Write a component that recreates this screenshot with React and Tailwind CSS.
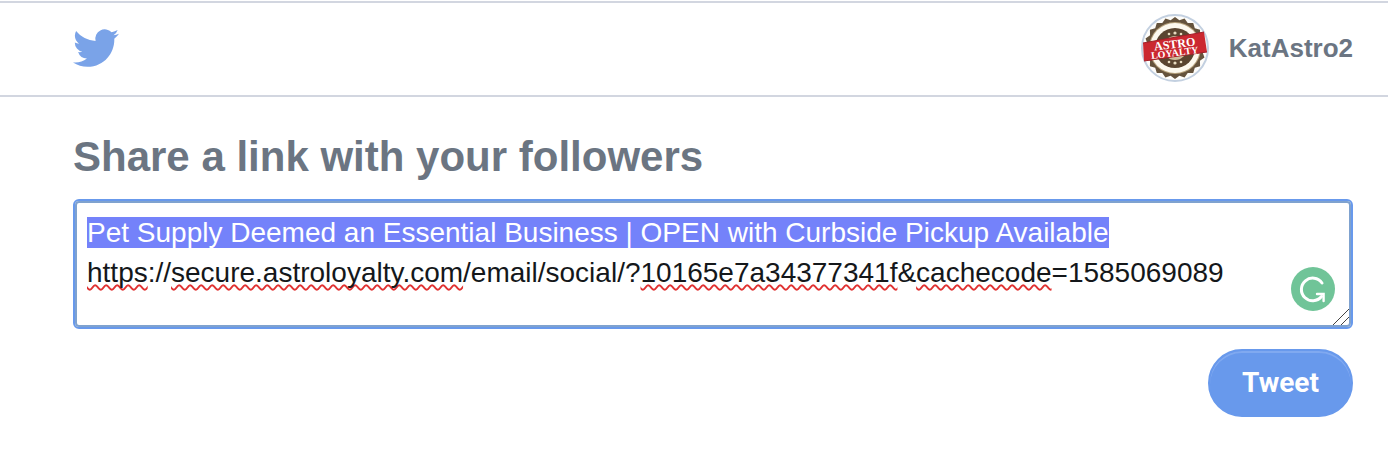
import React, { useState } from "react";

const TITLE = "Pet Supply Deemed an Essential Business | OPEN with Curbside Pickup Available";
const LINK = [
  { text: "https", flagged: true },
  { text: "://" },
  { text: "secure.astroloyalty.com", flagged: true },
  { text: "/email/social/?" },
  { text: "10165e7a34377341f", flagged: true },
  { text: "&" },
  { text: "cachecode", flagged: true },
  { text: "=1585069089" },
];
const INITIAL = TITLE + "\n" + LINK.map((p) => p.text).join("");

// The field and its highlight layer must share the same text metrics
const FIELD_TEXT = "px-2.5 py-2.5 text-[28px] leading-10 whitespace-pre-wrap break-words";

// Toothed edge of the seal: alternating outer and inner radius
const TEETH = Array.from({ length: 40 }, (_, i) => {
  const r = i % 2 ? 28 : 31;
  const a = (i * Math.PI) / 20;
  return `${(34 + r * Math.cos(a)).toFixed(2)},${(34 + r * Math.sin(a)).toFixed(2)}`;
}).join(" ");

function Bird() {
  return (
    <svg viewBox="0 0 24 24" className="w-[46px] h-[46px]" fill="#7aa3e8" aria-hidden="true">
      <path d="M23.953 4.57a10 10 0 01-2.825.775 4.958 4.958 0 002.163-2.723c-.951.555-2.005.959-3.127 1.184a4.92 4.92 0 00-8.384 4.482C7.69 8.095 4.067 6.13 1.64 3.162a4.822 4.822 0 00-.666 2.475c0 1.71.87 3.213 2.188 4.096a4.904 4.904 0 01-2.228-.616v.06a4.923 4.923 0 003.946 4.827 4.996 4.996 0 01-2.212.085 4.936 4.936 0 004.604 3.417 9.867 9.867 0 01-6.102 2.105c-.39 0-.779-.023-1.17-.067a13.995 13.995 0 007.557 2.209c9.053 0 13.998-7.496 13.998-13.985 0-.21 0-.42-.015-.63A9.935 9.935 0 0024 4.59z" />
    </svg>
  );
}

function Avatar() {
  return (
    <svg viewBox="0 0 68 68" className="size-[68px]" aria-hidden="true">
      <circle cx="34" cy="34" r="33" fill="#fefdfa" stroke="#c3d0e0" strokeWidth="2" />
      <polygon points={TEETH} fill="#65533c" />
      <circle cx="34" cy="34" r="26" fill="#b7a27c" />
      <circle cx="34" cy="34" r="25" fill="#fdf9ee" />
      <circle cx="34" cy="34" r="20" fill="#5a4530" />
      <circle cx="34" cy="34" r="12" fill="#cdbd9c" />
      <g fill="#e8dcc0">
        <circle cx="28" cy="20" r="1.3" />
        <circle cx="34" cy="19" r="1.6" />
        <circle cx="40" cy="20" r="1.3" />
        <circle cx="28" cy="48" r="1.3" />
        <circle cx="34" cy="49" r="1.6" />
        <circle cx="40" cy="48" r="1.3" />
      </g>
      <path d="M2 29 L63 18 L66 38 L3 47 Z" fill="#cb2830" />
      <path d="M2 29 L63 18 M3 47 L66 38" stroke="#a3202a" strokeWidth="1" />
      <g
        transform="rotate(-7 34 33)"
        fill="#fff"
        fontFamily="Liberation Serif, serif"
        fontWeight="700"
        textAnchor="middle"
      >
        <text x="34" y="34" fontSize="12">ASTRO</text>
        <text x="33" y="42" fontSize="10">LOYALTY</text>
      </g>
    </svg>
  );
}

function GrammarBadge() {
  return (
    <svg viewBox="0 0 44 44" className="size-11" aria-hidden="true">
      <circle cx="22" cy="22" r="22" fill="#70c498" />
      <path
        d="M31 16 A11.3 11.3 0 1 0 30.5 29.5"
        fill="none"
        stroke="#fff"
        strokeWidth="3"
        strokeLinecap="round"
      />
      <path d="M26 27 H32.6 V34" fill="none" stroke="#fff" strokeWidth="2.4" strokeLinecap="round" />
    </svg>
  );
}

function Grip() {
  return (
    <svg viewBox="0 0 16 16" className="size-4" stroke="#444" strokeWidth="1" aria-hidden="true">
      <path d="M0 16 L16 0 M8 16 L16 8" />
    </svg>
  );
}

function Highlights({ value }) {
  if (value !== INITIAL) return <>{value}</>;
  return (
    <>
      <span className="bg-[#7482fa] text-white">{TITLE}</span>
      {"\n"}
      {LINK.map((p, i) => (
        <span
          key={i}
          className={p.flagged ? "underline decoration-wavy decoration-[#e03131] decoration-2 underline-offset-2 [text-decoration-skip-ink:none]" : ""}
        >
          {p.text}
        </span>
      ))}
    </>
  );
}

export default function App() {
  const [value, setValue] = useState(INITIAL);

  return (
    <div className="min-h-screen bg-white pt-px font-['Liberation_Sans',Arial,sans-serif] text-[#6b7582]">
      <header className="flex items-center justify-between border-y-2 border-[#d2d6e0] pl-[73px] pr-[35px] pt-[11px] pb-[13px]">
        <a href="#home" aria-label="Twitter">
          <Bird />
        </a>
        <a href="#profile" className="flex items-center gap-5 text-[26px] leading-8 font-bold">
          <Avatar />
          KatAstro2
        </a>
      </header>

      <main className="pl-[73px] pr-[35px] pt-9">
        <form onSubmit={(e) => e.preventDefault()}>
          <h1 className="text-[42px] leading-12 font-bold">
            <label htmlFor="status">Share a link with your followers</label>
          </h1>

          <div className="relative mt-[18px] rounded-md border-2 border-[#6899ec]">
            <textarea
              id="status"
              value={value}
              onChange={(e) => setValue(e.target.value)}
              spellCheck={false}
              className={"block h-[126px] w-full resize-none overflow-hidden rounded-sm border-2 border-[#7fa2cf] bg-white text-transparent caret-black outline-none " + FIELD_TEXT}
            />
            <div
              aria-hidden="true"
              className={"pointer-events-none absolute inset-0 overflow-hidden border-2 border-transparent text-[#14171a] " + FIELD_TEXT}
            >
              <Highlights value={value} />
            </div>
            <div className="pointer-events-none absolute right-4 bottom-4">
              <GrammarBadge />
            </div>
            <div className="pointer-events-none absolute right-0.5 bottom-0.5">
              <Grip />
            </div>
          </div>

          <div className="mt-5 flex justify-end">
            <button
              type="submit"
              className="h-[68px] w-[145px] rounded-full border-2 border-[#6899ec] bg-[#6899ec] font-[Roboto,sans-serif] text-[28px] leading-8 font-bold text-white shadow-[inset_0_2px_0_#80a9f0]"
            >
              Tweet
            </button>
          </div>
        </form>
      </main>
    </div>
  );
}
